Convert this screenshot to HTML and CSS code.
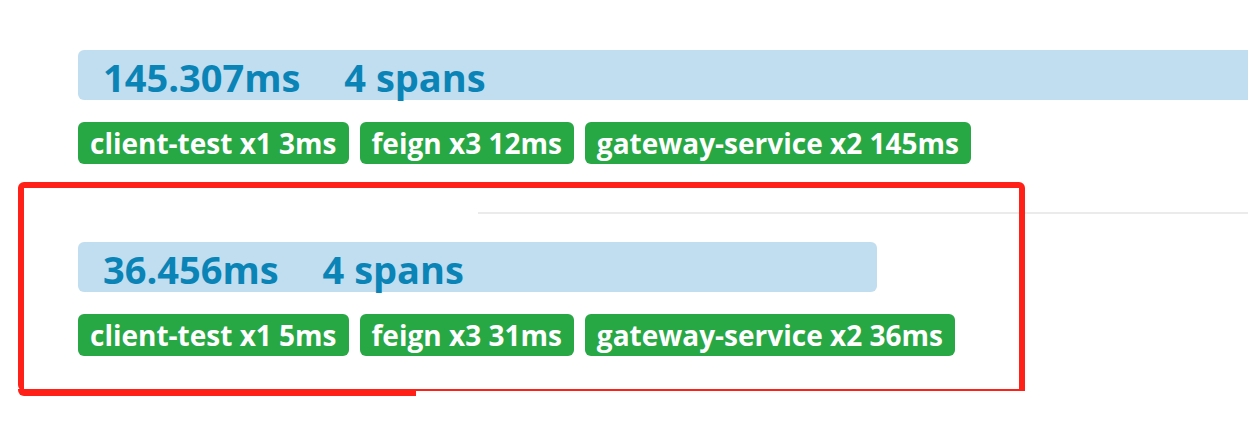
FILE: index.html
```html
<!DOCTYPE html>
<html lang="en">
<head>
  <meta charset="UTF-8">
  <meta name="viewport" content="width=device-width, initial-scale=1.0">
  <title>traces</title>
  <link rel="stylesheet" href="styles.css">
</head>
<body>
  <div class="traces">
    <div class="trace first">
      <div class="summary wide">
        <span class="duration">145.307ms</span>
        <span class="spans">4 spans</span>
      </div>
      <div class="services">
        <span class="service">client-test x1 3ms</span>
        <span class="service">feign x3 12ms</span>
        <span class="service">gateway-service x2 145ms</span>
      </div>
    </div>
    <div class="trace">
      <div class="summary" style="width: 799px">
        <span class="duration">36.456ms</span>
        <span class="spans">4 spans</span>
      </div>
      <div class="services">
        <span class="service">client-test x1 5ms</span>
        <span class="service">feign x3 31ms</span>
        <span class="service">gateway-service x2 36ms</span>
      </div>
      <!-- hand drawn highlight -->
      <div class="highlight"></div>
    </div>
    <div class="trace last"></div>
  </div>
</body>
</html>
```

FILE: styles.css
```css
body {
  font-family: 'Open Sans', 'Noto Sans', sans-serif;
  background-color: #fff;
  margin: 0;
  overflow: hidden;
}
.traces {
  padding-top: 20px;
}
.trace {
  position: relative;
  padding: 30px 0 48px 78px;
}
.trace + .trace::before {
  content: '';
  position: absolute;
  top: 0;
  left: 478px;
  right: 0;
  height: 2px;
  background-color: #ebebeb;
}
.trace.last {
  padding: 0;
}
.summary {
  box-sizing: border-box;
  height: 50px;
  background-color: #c0deef;
  border-radius: 6px;
  color: #0a84b6;
  font-size: 38px;
  font-weight: 700;
  line-height: 46px;
  padding: 4px 0 0 25px;
  white-space: nowrap;
}
.summary.wide {
  border-radius: 6px 0 0 6px;
}
.duration {
  margin-right: 34px;
}
.services {
  display: flex;
  gap: 11px;
  margin-top: 22px;
}
.service {
  background-color: #28a745;
  color: #fff;
  font-size: 28px;
  font-weight: 700;
  line-height: 42px;
  padding: 0 12px;
  border-radius: 6px;
  white-space: nowrap;
}
.highlight {
  position: absolute;
  left: 18px;
  top: -30px;
  width: 1007px;
  height: 209px;
  box-sizing: border-box;
  border: 6px solid #ff2117;
  border-bottom-width: 2px;
  border-radius: 6px 6px 0 6px;
}
.highlight::after {
  content: '';
  position: absolute;
  left: -6px;
  bottom: -7px;
  width: 398px;
  height: 7px;
  background-color: #ff2117;
  border-bottom-left-radius: 6px;
}
```
